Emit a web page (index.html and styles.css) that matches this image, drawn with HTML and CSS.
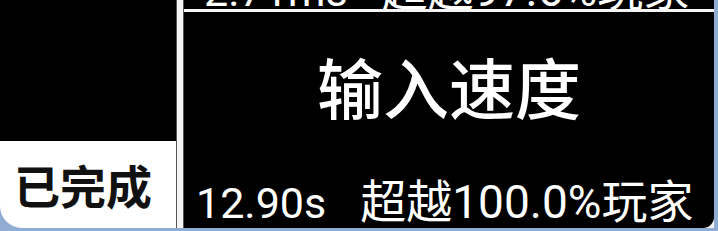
FILE: index.html
```html
<!DOCTYPE html>
<html lang="zh-CN">
<head>
  <meta charset="UTF-8">
  <title>输入速度</title>
  <link rel="stylesheet" href="styles.css">
</head>
<body>
<div class="board">
  <div class="side">
    <div class="side-top"></div>
    <div class="status">已完成</div>
  </div>
  <div class="divider"></div>
  <div class="cards">
    <div class="card card-prev">
      <div class="result">
        <span class="time">2.71ms</span>
        <span class="rank">超越97.6%玩家</span>
      </div>
    </div>
    <div class="card card-main">
      <div class="title">输入速度</div>
      <div class="result">
        <span class="time">12.90s</span>
        <span class="rank">超越100.0%玩家</span>
      </div>
    </div>
  </div>
</div>
</body>
</html>
```

FILE: styles.css
```css
body {
  margin: 0;
  background-color: #90acd2;
  font-family: Roboto, "Noto Sans CJK SC", sans-serif;
}
.board {
  display: flex;
  width: 714px;
  height: 228px;
  overflow: hidden;
}
.side {
  width: 176px;
  display: flex;
  flex-direction: column;
}
.side-top {
  flex: 1;
  background-color: #000;
}
.status {
  height: 87px;
  background-color: #fff;
  border-bottom-left-radius: 22px;
  color: #111;
  font-family: "Noto Sans CJK SC", sans-serif;
  font-weight: 700;
  font-size: 46px;
  line-height: 87px;
  padding-left: 14px;
}
.divider {
  width: 6px;
  background-color: #f4f4f4;
  border-left: 1px solid #555;
  border-right: 1px solid #555;
}
.cards {
  flex: 1;
  display: flex;
  flex-direction: column;
  gap: 3px;
  background-color: #f4f4f4;
}
.card {
  background-color: #000;
  color: #fff;
  overflow: hidden;
  position: relative;
}
.card-prev {
  height: 9px;
}
.card-prev .result {
  position: absolute;
  left: 20px;
  bottom: -4px;
}
.card-main {
  flex: 1;
  border-bottom-right-radius: 11px;
  display: flex;
  flex-direction: column;
}
.title {
  text-align: center;
  font-family: "Noto Sans CJK SC", sans-serif;
  font-weight: 500;
  font-size: 66px;
  line-height: 1;
  margin-top: 40px;
}
.result {
  display: flex;
  align-items: baseline;
  gap: 34px;
  font-size: 43px;
  line-height: 1;
  white-space: nowrap;
}
.card-main .result {
  margin-top: auto;
  padding-left: 12px;
  padding-bottom: 3px;
}
.rank {
  font-size: 46px;
}
```
